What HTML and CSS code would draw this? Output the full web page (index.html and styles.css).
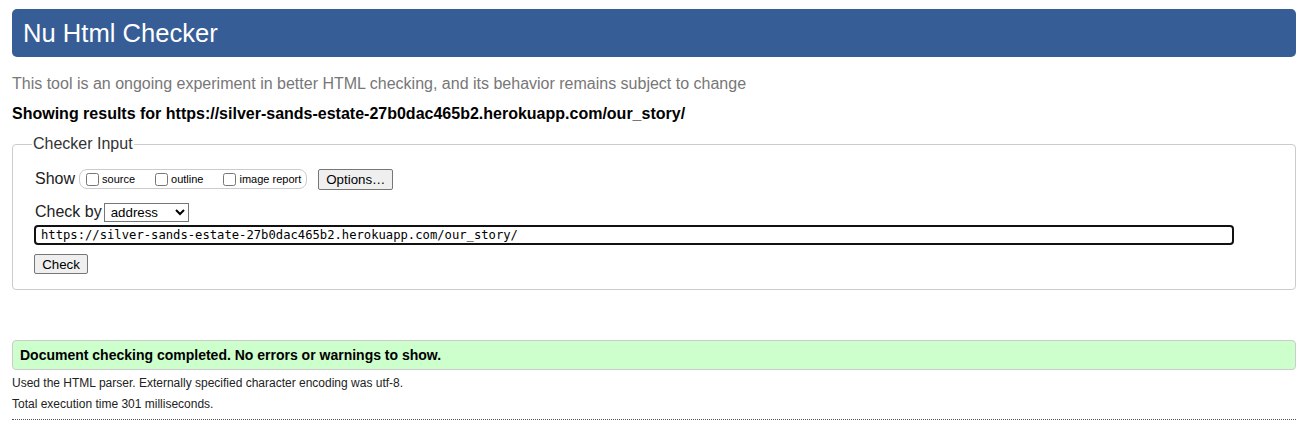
FILE: index.html
```html
<!DOCTYPE html>
<html>
<head>
<meta charset="utf-8">
<title>Nu Html Checker</title>
<link rel="stylesheet" href="styles.css">
</head>
<body>
<h1 class="title">Nu Html Checker</h1>
<p class="lead">This tool is an ongoing experiment in better HTML checking, and its behavior remains subject to change</p>
<p class="showing">Showing results for https://silver-sands-estate-27b0dac465b2.herokuapp.com/our_story/</p>
<fieldset class="input-box">
  <legend class="legend">Checker Input</legend>
  <div class="row show-row">
    <span class="row-label">Show</span>
    <span class="pill">
      <label class="opt"><input type="checkbox" class="cb">source</label>
      <label class="opt"><input type="checkbox" class="cb">outline</label>
      <label class="opt"><input type="checkbox" class="cb">image report</label>
    </span>
    <button class="btn options">Options…</button>
  </div>
  <div class="row by-row">
    <span class="row-label">Check by</span>
    <select class="sel"><option>address</option></select>
  </div>
  <div class="url">https://silver-sands-estate-27b0dac465b2.herokuapp.com/our_story/</div>
  <button class="btn check">Check</button>
</fieldset>
<div class="success">Document checking completed. No errors or warnings to show.</div>
<p class="details">Used the HTML parser. Externally specified character encoding was utf-8.</p>
<p class="details">Total execution time 301 milliseconds.</p>
<div class="rule"></div>
</body>
</html>
```
FILE: styles.css
```css
html, body { margin: 0; padding: 0; background: #fff; }
body {
  font-family: "Liberation Sans", Arial, sans-serif;
  color: #000;
  padding: 9px 5px 0 12px;
}
.title {
  margin: 0;
  height: 48px;
  box-sizing: border-box;
  background: #365d95;
  color: #fff;
  font-weight: normal;
  font-size: 25.6px;
  line-height: 48px;
  padding: 0 11px;
  border-radius: 5px;
}
.lead {
  margin: 17px 0 0;
  font-size: 16px;
  line-height: 20px;
  color: #777;
}
.showing {
  margin: 10px 0 0;
  font-size: 16px;
  font-weight: bold;
  line-height: 20px;
  color: #000;
}
.input-box {
  margin: 11px 0 0;
  padding: 15px 20px 15px 22px;
  border: 1px solid #ccc;
  border-radius: 4px;
  min-width: 0;
}
.legend {
  padding: 0 1px;
  margin-left: -3px;
  font-size: 16px;
  line-height: 18px;
  color: #333;
}
.row { display: flex; align-items: center; }
.show-row { height: 22px; }
.row-label { font-size: 16px; color: #222; }
.pill {
  display: flex;
  align-items: center;
  margin-left: 4px;
  height: 20px;
  box-sizing: border-box;
  padding: 0 5px 0 6px;
  border: 1px solid #ccc;
  border-radius: 8px;
  font-size: 11px;
  gap: 20px;
}
.opt { display: flex; align-items: center; }
.cb { margin: 0 3px 0 0; width: 13px; height: 13px; }
.btn {
  font-family: "Liberation Sans", Arial, sans-serif;
  font-size: 13.3px;
  background: #efefef;
  border: 1px solid #767676;
  border-radius: 2px;
  color: #000;
  padding: 1px 7px;
}
.options { margin-left: 11px; height: 21px; }
.by-row { margin-top: 12px; height: 20px; }
.sel {
  margin-left: 2px;
  font-family: "Liberation Sans", Arial, sans-serif;
  font-size: 13.3px;
  width: 85px;
  height: 19px;
  border: 1px solid #767676;
  border-radius: 0;
  padding: 0 0 0 2px;
  background: #fff;
}
.url {
  margin-top: 3px;
  height: 20px;
  box-sizing: border-box;
  width: 1200px;
  margin-left: -1px;
  border: 2px solid #111;
  border-radius: 4px;
  font-family: "DejaVu Sans Mono", "Liberation Mono", monospace;
  font-size: 12.2px;
  line-height: 16px;
  padding: 0 5px;
  color: #000;
}
.check { margin-top: 9px; margin-left: -1px; height: 20px; width: 54px; padding: 0; }
.success {
  margin-top: 50px;
  height: 30px;
  box-sizing: border-box;
  background: #ccffcc;
  border: 1px solid #ccc;
  border-radius: 4px;
  font-weight: bold;
  font-size: 14px;
  line-height: 28px;
  padding: 0 7px;
}
.details {
  margin: 6px 0 0;
  font-size: 12px;
  line-height: 15px;
  color: #222;
}
.details + .details { margin-top: 6px; }
.rule { margin-top: 7px; border-top: 1px dotted #555; }
```
